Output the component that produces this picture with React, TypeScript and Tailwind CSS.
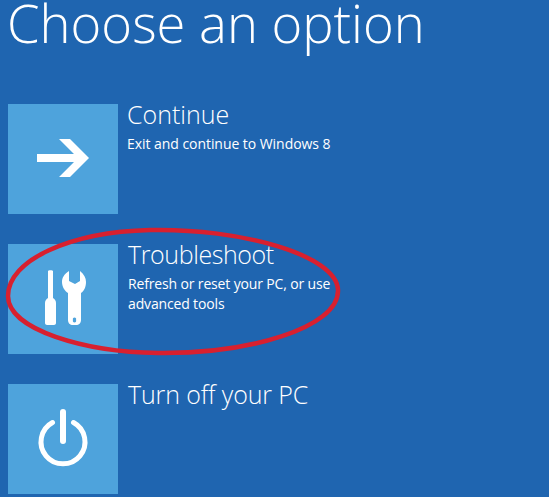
const font = { fontFamily: '"Open Sans", sans-serif' };

function Option({ icon, title, desc, gap = "gap-[10px]", titleClass = "", descClass = "tracking-[-0.15px]" }: { icon: React.ReactNode; title: string; desc?: React.ReactNode; gap?: string; titleClass?: string; descClass?: string }) {
  return (
    <div className={`flex h-[110px] ${gap}`}>
      <div className="w-[110px] h-[110px] shrink-0 bg-[#4ea3dc]">{icon}</div>
      <div className="text-white">
        <div className={`text-[25px] leading-[24px] font-light -mt-[2px] ${titleClass}`}>{title}</div>
        {desc && <div className={`mt-[8px] text-[14px] leading-[20px] ${descClass}`}>{desc}</div>}
      </div>
    </div>
  );
}

export default function App() {
  return (
    <div className="relative w-[549px] h-[497px] overflow-hidden bg-[#1f65b0] pl-2" style={font}>
      <h1 className="text-white font-light text-[52.5px] leading-[44px] h-[104px] -ml-[1px] pt-[1px]">Choose an option</h1>
      <div className="flex flex-col gap-[30px]">
        <Option
          title="Continue"
          gap="gap-[9px]"
          descClass="tracking-[-0.05px]"
          desc="Exit and continue to Windows 8"
          icon={
            <svg width="110" height="110" viewBox="0 0 110 110" fill="white">
              <path d="M29 50h37L51 35h11l19 19-19 19H51l15-15H29z" />
            </svg>
          }
        />
        <Option
          title="Troubleshoot"
          titleClass="tracking-[-0.4px]"
          desc={<>Refresh or reset your PC, or use<br />advanced tools</>}
          icon={
            <svg width="110" height="110" viewBox="0 0 110 110" fill="white">
              {/* screwdriver */}
              <path d="M40 27c0-1 5-1 5 0v27c2 1 3 3 3 5v20c0 1-1 2-2 2h-7c-1 0-2-1-2-2V59c0-2 1-4 3-5z" />
              {/* wrench */}
              <path fillRule="evenodd" d="M61 27c-5 3-7 7-7 11 0 5 3 9 6 11v27c0 3 2 5 5 5h3c3 0 5-2 5-5V49c3-2 5-6 5-11 0-4-2-8-6-11v10l-5 3-6-3zM65 76a1.7 1.7 0 1 0 3 0 1.7 1.7 0 1 0-3 0z" />
            </svg>
          }
        />
        <Option
          title="Turn off your PC"
          titleClass="tracking-[-0.13px]"
          icon={
            <svg width="110" height="110" viewBox="0 0 110 110" fill="none" stroke="white">
              <path d="M44.5 38.5a22 22 0 1 0 21 0" strokeWidth="5" strokeLinecap="round" />
              <path d="M55 28v29" strokeWidth="6" strokeLinecap="round" />
            </svg>
          }
        />
      </div>
      {/* red hand-drawn ellipse */}
      <svg className="absolute left-0 top-[220px]" width="350" height="145" viewBox="0 0 350 145" fill="none">
        <path
          d="M150 10C240 8 337 35 338 70c1 38-90 64-180 63C85 132 8 110 8 76 8 40 70 12 150 10z"
          stroke="#d8202f"
          strokeWidth="4.5"
        />
      </svg>
    </div>
  );
}
